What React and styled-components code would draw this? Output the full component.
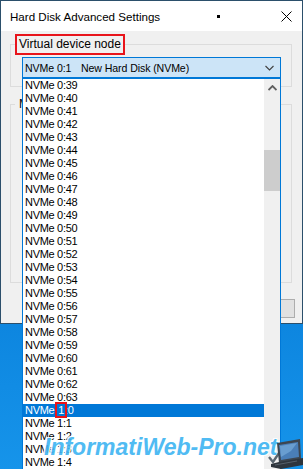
import styled, { createGlobalStyle } from 'styled-components';

const GlobalStyle = createGlobalStyle`
  html, body {
    margin: 0;
    padding: 0;
  }
  body {
    background: #0c82dc;
    overflow: hidden;
  }
`;

const Desktop = styled.div`
  position: relative;
  width: 303px;
  height: 469px;
  overflow: hidden;
  background: linear-gradient(180deg, #0a74cf 0%, #0c84de 65%, #1694ea 100%);
  font-family: 'Liberation Sans', Arial, sans-serif;
  color: #000;
`;

const Window = styled.div`
  box-sizing: border-box;
  width: 303px;
  height: 324px;
  border: 1px solid #2b4f6b;
  background: #f0f0f0;
  display: flex;
  flex-direction: column;
`;

const TitleBar = styled.div`
  height: 30px;
  background: #fff;
  display: flex;
  align-items: center;
  padding: 0 10px 0 9px;
  font-size: 11.6px;
`;

const Title = styled.span`
  flex: 1;
`;

const MinGlyph = styled.span`
  width: 3px;
  height: 3px;
  background: #000;
  margin-right: 61px;
`;

const CloseGlyph = styled.svg`
  width: 11px;
  height: 11px;
  display: block;
`;

const Body = styled.div`
  flex: 1;
  display: flex;
  flex-direction: column;
  padding: 3px 10px 0 9px;
  gap: 7px;
`;

const Group = styled.fieldset`
  margin: 0;
  padding: 0;
  border: 1px solid #dcdcdc;
  min-width: 0;
  height: ${(p) => p.$height}px;
  box-sizing: border-box;
`;

const Legend = styled.legend`
  margin-left: 4px;
  padding: 0 2px;
  font-size: 12px;
  line-height: 17px;
  border: 2px solid ${(p) => (p.$marked ? '#e8141b' : 'transparent')};
`;

const GroupContent = styled.div`
  padding: 2px 10px 8px 11px;
`;

const ComboWrap = styled.div`
  position: relative;
`;

const Combo = styled.div`
  box-sizing: border-box;
  height: 21px;
  border: 1px solid #0078d7;
  background: #cce4f7;
  display: flex;
  align-items: center;
  padding: 0 6px 0 2px;
  font-size: 10.6px;
  letter-spacing: -0.1px;
`;

const ComboSlot = styled.span`
  width: 56px;
  flex: none;
`;

const ComboLabel = styled.span`
  flex: 1;
`;

const Chevron = styled.svg`
  width: 9px;
  height: 6px;
  display: block;
`;

const DropList = styled.div`
  position: absolute;
  top: 100%;
  left: 0;
  z-index: 5;
  box-sizing: border-box;
  width: 259px;
  height: 392px;
  border: 1px solid #0078d7;
  background: #fff;
  display: flex;
`;

const Rows = styled.div`
  flex: 1;
  display: flex;
  flex-direction: column;
`;

const Row = styled.div`
  height: 13px;
  line-height: 13px;
  padding-left: 2px;
  font-size: 11px;
  letter-spacing: -0.3px;
  white-space: nowrap;
  color: ${(p) => (p.$selected ? '#fff' : '#000')};
  background: ${(p) => (p.$selected ? '#0078d7' : 'transparent')};
`;

const Mark = styled.span`
  outline: 2px solid #e8141b;
  outline-offset: 0;
  padding: 0 1px;
`;

const ScrollBar = styled.div`
  width: 16px;
  background: #f0f0f0;
  display: flex;
  flex-direction: column;
  align-items: center;
`;

const ScrollArrow = styled.div`
  height: 17px;
  display: flex;
  align-items: center;
  justify-content: center;
`;

const Thumb = styled.div`
  width: 16px;
  height: 41px;
  margin-top: 54px;
  background: #cdcdcd;
`;

const ButtonRow = styled.div`
  display: flex;
  justify-content: flex-end;
  padding: 9px 7px 0 0;
  margin-right: -10px;
`;

const Button = styled.div`
  box-sizing: border-box;
  width: 75px;
  height: 19px;
  border: 1px solid #adadad;
  background: #e1e1e1;
`;

const Watermark = styled.div`
  position: absolute;
  left: 44px;
  top: 434px;
  font-weight: bold;
  font-style: italic;
  font-size: 23px;
  color: #42b6f2;
  z-index: 10;
  text-shadow: 0 0 1px #fff, 1px 1px 0 #fff, -1px -1px 0 #fff, 1px -1px 0 #fff, -1px 1px 0 #fff;
  opacity: 0.92;
`;

const Laptop = styled.svg`
  position: absolute;
  right: 0;
  bottom: 0;
  width: 36px;
  height: 32px;
  z-index: 11;
`;

const rows = [];
for (let i = 39; i <= 63; i++) rows.push(`NVMe 0:${i}`);
for (let i = 0; i <= 4; i++) rows.push(`NVMe 1:${i}`);

const App = () => (
  <Desktop>
    <GlobalStyle />
    <Window>
      <TitleBar>
        <Title>Hard Disk Advanced Settings</Title>
        <MinGlyph />
        <CloseGlyph viewBox="0 0 11 11">
          <path d="M0.5 0.5 L10.5 10.5 M10.5 0.5 L0.5 10.5" stroke="#000" strokeWidth="1" fill="none" />
        </CloseGlyph>
      </TitleBar>
      <Body>
        <Group $height={53}>
          <Legend $marked>Virtual device node</Legend>
          <GroupContent>
            <ComboWrap>
              <Combo>
                <ComboSlot>NVMe 0:1</ComboSlot>
                <ComboLabel>New Hard Disk (NVMe)</ComboLabel>
                <Chevron viewBox="0 0 9 6">
                  <path d="M0.5 1 L4.5 5 L8.5 1" stroke="#404040" strokeWidth="1.1" fill="none" />
                </Chevron>
              </Combo>
              <DropList>
                <Rows>
                  {rows.map((r) =>
                    r === 'NVMe 1:0' ? (
                      <Row key={r} $selected>
                        NVMe <Mark>1</Mark>:0
                      </Row>
                    ) : (
                      <Row key={r}>{r}</Row>
                    )
                  )}
                </Rows>
                <ScrollBar>
                  <ScrollArrow>
                    <Chevron viewBox="0 0 9 6">
                      <path d="M0.5 5 L4.5 1 L8.5 5" stroke="#606060" strokeWidth="1.8" fill="none" />
                    </Chevron>
                  </ScrollArrow>
                  <Thumb />
                </ScrollBar>
              </DropList>
            </ComboWrap>
          </GroupContent>
        </Group>
        <Group $height={189}>
          <Legend>Mode</Legend>
        </Group>
        <ButtonRow>
          <Button />
        </ButtonRow>
      </Body>
    </Window>
    <Watermark>InformatiWeb-Pro.net</Watermark>
    <Laptop viewBox="0 0 36 32">
      <path d="M2 20 L6 25 L12 16" stroke="#5a6670" strokeWidth="2.4" fill="none" />
      <path d="M10 6 L33 2 L34 22 L12 26 Z" fill="#3d4650" />
      <path d="M12 8 L31 5 L32 20 L14 23 Z" fill="#4a7fb8" />
      <path d="M13 9 L30 6 L24 14 L14 20 Z" fill="#7fb2e0" opacity="0.6" />
      <path d="M4 27 L12 25 L36 21 L36 28 L14 32 L4 30 Z" fill="#2e353c" />
      <path d="M8 28 L30 24" stroke="#56606a" strokeWidth="1" />
    </Laptop>
  </Desktop>
);

export default App;
